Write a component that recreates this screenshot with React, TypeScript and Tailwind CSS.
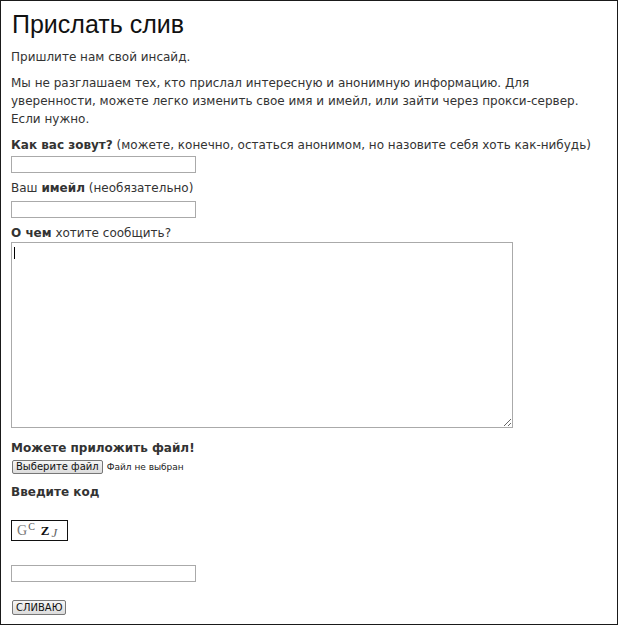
import React from "react";

const font = { fontFamily: '"DejaVu Sans", Verdana, sans-serif' };

const App = () => {
  return (
    <div
      className="w-[618px] h-[625px] border border-[#1a1a1a] bg-white text-[#333] text-[12px] leading-[18px] px-[10px]"
      style={font}
    >
      <h1
        className="text-[25px] leading-[30px] text-[#111] mt-[8px] mb-[9px] ml-[1px]"
        style={{ fontFamily: '"Liberation Sans", Arial, sans-serif' }}
      >
        Прислать слив
      </h1>
      <p className="mb-[8px]">Пришлите нам свой инсайд.</p>
      <p className="mb-[8px]">
        Мы не разглашаем тех, кто прислал интересную и анонимную информацию. Для уверенности, можете легко
        изменить свое имя и имейл, или зайти через прокси-сервер. Если нужно.
      </p>

      <div>
        <b>Как вас зовут?</b> (можете, конечно, остаться анонимом, но назовите себя хоть как-нибудь)
      </div>
      <input type="text" className="block mt-[2px] w-[185px] h-[17px] border border-[#aaa] bg-white" />

      <div className="mt-[6px]">
        Ваш <b>имейл</b> (необязательно)
      </div>
      <input type="text" className="block mt-[4px] w-[185px] h-[17px] border border-[#aaa] bg-white" />

      <div className="mt-[6px]">
        <b>О чем</b> хотите сообщить?
      </div>
      <div className="relative w-[502px] h-[186px]">
        <textarea className="block w-full h-full border border-[#aaa] bg-white resize" />
        <div className="absolute left-[3px] top-[5px] w-px h-[12px] bg-black" />
      </div>

      <div className="mt-[11px] font-bold">Можете приложить файл!</div>
      <div className="flex items-center gap-[4px] mt-[3px] h-[14px]">
        <button className="h-[14px] ml-[1px] px-[3px] text-[10px] leading-[12px] border border-[#777] rounded-[2px] bg-gradient-to-b from-[#f6f6f6] to-[#dcdcdc] text-[#111]">
          Выберите файл
        </button>
        <span className="text-[9px] text-[#222]">Файл не выбран</span>
      </div>

      <div className="mt-[9px] font-bold">Введите код</div>

      <div
        className="mt-[19px] w-[57px] h-[21px] border border-[#111] flex items-center pl-[5px]"
        style={{ fontFamily: '"Liberation Serif", serif' }}
      >
        <span className="text-[14px] text-[#777] leading-none">G</span>
        <span className="text-[10px] text-[#555] leading-none relative -top-[4px] ml-[1px]">C</span>
        <span className="text-[13px] font-bold text-[#111] leading-none ml-[6px]">Z</span>
        <span className="text-[13px] italic text-[#666] leading-none relative top-[2px] ml-[2px]">J</span>
      </div>

      <input type="text" className="block mt-[24px] w-[185px] h-[17px] border border-[#aaa] bg-white" />

      <button className="block mt-[18px] ml-[1px] h-[15px] px-[3px] text-[10px] leading-[12px] border border-[#777] rounded-[2px] bg-gradient-to-b from-[#f6f6f6] to-[#dcdcdc] text-[#111]">
        СЛИВАЮ
      </button>
    </div>
  );
};

export default App;
